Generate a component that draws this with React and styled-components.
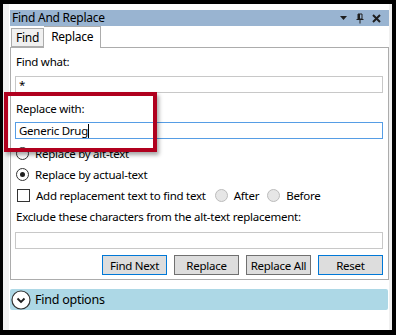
import React from "react";
import styled, { createGlobalStyle } from "styled-components";

const GlobalStyle = createGlobalStyle`
  body {
    margin: 0;
    background: #000;
    font-family: "Segoe UI", "Noto Sans", sans-serif;
    font-size: 11.5px;
    letter-spacing: -0.25px;
    color: #000;
  }
`;

function App() {
  return (
    <Screen>
      <GlobalStyle />
      <Window>
        <Dock>
          <TitleBar>
            <Title>Find And Replace</Title>
            <TitleIcons>
              <svg width="8" height="5" viewBox="0 0 8 5">
                <path d="M0 0 H7 L3.5 4 Z" fill="#1e1e1e" />
              </svg>
              <svg width="8" height="11" viewBox="0 0 8 11">
                <path d="M2 1 H6 V6 H2 Z" fill="none" stroke="#1e1e1e" strokeWidth="1" />
                <path d="M2 1 H4 V6 H2 Z" fill="#1e1e1e" />
                <path d="M0.5 6.5 H7.5 M4 6.5 V10.5" stroke="#1e1e1e" strokeWidth="1" />
              </svg>
              <svg width="9" height="9" viewBox="0 0 9 9">
                <path d="M1 1 L8 8 M8 1 L1 8" stroke="#1e1e1e" strokeWidth="2" />
              </svg>
            </TitleIcons>
          </TitleBar>

          <TabStrip>
            <Tab>Find</Tab>
            <Tab $active>Replace</Tab>
          </TabStrip>

          <Panel>
            <Label $top={6}>Find what:</Label>
            <Field $top={6}>*</Field>
            <Label $top={8}>Replace with:</Label>
            <Field $top={5} $focused>
              Generic Drug<Caret />
            </Field>

            <Rows>
              <OptionRow>
                <Radio />
                Replace by alt-text
              </OptionRow>
              <OptionRow>
                <Radio $checked />
                Replace by actual-text
              </OptionRow>
              <OptionRow>
                <CheckBox />
                Add replacement text to find text
                <Radio $disabled $gap={9} />
                After
                <Radio $disabled $gap={8} />
                Before
              </OptionRow>
              <OptionRow>Exclude these characters from the alt-text replacement:</OptionRow>
            </Rows>

            <Field $top={5} />

            <ButtonRow>
              <Button $accent>Find Next</Button>
              <Button>Replace</Button>
              <Button>Replace All</Button>
              <Button $accent>Reset</Button>
            </ButtonRow>
          </Panel>

          <Expander>
            <svg width="20" height="20" viewBox="0 0 20 20">
              <circle cx="10" cy="10" r="9" fill="#fff" stroke="#333" strokeWidth="1.2" />
              <path d="M6.5 8.5 L10 12 L13.5 8.5" fill="none" stroke="#1e1e1e" strokeWidth="1.8" />
            </svg>
            Find options
          </Expander>
        </Dock>
      </Window>
      <Callout />
    </Screen>
  );
}

export default App;

const Screen = styled.div`
  position: relative;
  width: 396px;
  height: 335px;
  box-sizing: border-box;
  padding: 4px 4px 5px 3px;
  background: #000;
`;

const Window = styled.div`
  width: 389px;
  height: 326px;
  background: #f0f0f0;
  padding-left: 6px;
  box-sizing: border-box;
`;

const Dock = styled.div`
  width: 380px;
  height: 100%;
  box-sizing: border-box;
  padding: 6px 0 0 1px;
  background: #fff;
  display: flex;
  flex-direction: column;
`;

const TitleBar = styled.div`
  height: 16px;
  background: #99b4d1;
  display: flex;
  align-items: center;
  justify-content: space-between;
  padding: 0 8px 0 2px;
`;

const Title = styled.span`
  line-height: 16px;
  font-size: 12px;
`;

const TitleIcons = styled.div`
  display: flex;
  align-items: center;
  gap: 8px;
`;

const TabStrip = styled.div`
  height: 21px;
  display: flex;
  align-items: flex-end;
  padding-left: 1px;
`;

const Tab = styled.div`
  box-sizing: border-box;
  height: ${(p) => (p.$active ? "22px" : "19px")};
  margin-bottom: ${(p) => (p.$active ? "-1px" : "0")};
  padding: 0 ${(p) => (p.$active ? "7px" : "4px")};
  border: 1px solid #acacac;
  border-bottom: ${(p) => (p.$active ? "none" : "1px solid #acacac")};
  border-left: ${(p) => (p.$active ? "none" : "1px solid #acacac")};
  background: ${(p) => (p.$active ? "#fff" : "#f0f0f0")};
  line-height: ${(p) => (p.$active ? "20px" : "17px")};
  font-size: 12px;
  position: relative;
  z-index: ${(p) => (p.$active ? 1 : 0)};
`;

const Panel = styled.div`
  border: 1px solid #acacac;
  padding: 0 5px 4px 4px;
  display: flex;
  flex-direction: column;
`;

const Label = styled.div`
  margin-top: ${(p) => p.$top}px;
  padding-left: 1px;
  line-height: 16px;
`;

const Field = styled.div`
  margin-top: ${(p) => p.$top}px;
  height: 17px;
  box-sizing: border-box;
  border: 1px solid ${(p) => (p.$focused ? "#569de5" : "#c8c8c8")};
  padding-left: 3px;
  line-height: 15px;
  display: flex;
  align-items: center;
`;

const Caret = styled.span`
  width: 1px;
  height: 14px;
  background: #000;
`;

const Rows = styled.div`
  margin-top: 4px;
  display: flex;
  flex-direction: column;
`;

const OptionRow = styled.div`
  height: 21px;
  display: flex;
  align-items: center;
  padding-left: 1px;
`;

const Radio = styled.span`
  width: 13px;
  height: 13px;
  box-sizing: border-box;
  border-radius: 50%;
  border: 1px solid ${(p) => (p.$disabled ? "#bcbcbc" : "#333")};
  background: ${(p) => (p.$disabled ? "#e6e6e6" : "#fff")};
  margin: 0 6px 0 ${(p) => p.$gap || 0}px;
  display: flex;
  align-items: center;
  justify-content: center;

  &::after {
    content: "";
    display: ${(p) => (p.$checked ? "block" : "none")};
    width: 5px;
    height: 5px;
    border-radius: 50%;
    background: #1e1e1e;
  }
`;

const CheckBox = styled.span`
  width: 13px;
  height: 13px;
  box-sizing: border-box;
  border: 1px solid #333;
  background: #fff;
  margin: 0 6px 0 1px;
`;

const ButtonRow = styled.div`
  margin-top: 6px;
  display: flex;
  justify-content: flex-end;
  gap: 7px;
`;

const Button = styled.div`
  width: 65px;
  height: 20px;
  box-sizing: border-box;
  border: 1px solid ${(p) => (p.$accent ? "#0078d7" : "#707070")};
  background: #dddddd;
  display: flex;
  align-items: center;
  justify-content: center;
`;

const Expander = styled.div`
  margin-top: 9px;
  width: 378px;
  height: 21px;
  background: #add8e6;
  border-radius: 2px;
  display: flex;
  align-items: center;
  gap: 4px;
  font-size: 12.5px;
  padding-left: 1px;
  box-sizing: border-box;
`;

const Callout = styled.div`
  position: absolute;
  left: 4px;
  top: 92px;
  width: 153px;
  height: 60px;
  box-sizing: border-box;
  border: 4px solid #b0001e;
  box-shadow: 2px 3px 4px rgba(0, 0, 0, 0.35);
`;
